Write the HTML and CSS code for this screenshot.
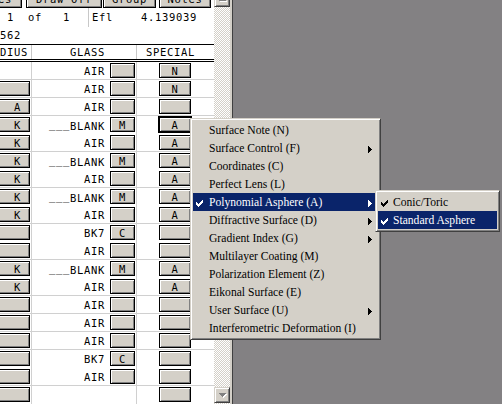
FILE: index.html
```html
<!DOCTYPE html>
<html>
<head>
<meta charset="utf-8">
<link rel="stylesheet" href="styles.css">
</head>
<body>
<div class="app">
  <div class="panel">
    <div class="toolbar">
      <div class="btn tb tb-es">es</div>
      <div class="btn tb tb-draw">Draw Off</div>
      <div class="btn tb tb-group">Group</div>
      <div class="btn tb tb-notes">Notes</div>
    </div>
    <div class="info">
      <div class="info-a"> 1  of   1</div>
      <div class="info-b">Efl    4.139039</div>
    </div>
    <div class="sub">562</div>
    <div class="head">
      <div class="h1">DIUS</div>
      <div class="h2">GLASS</div>
      <div class="h3">SPECIAL</div>
    </div>
    <div class="dbl"></div>
    <div class="rows">
      <div class="r sep"><div class="c1"></div><div class="c2"><span class="g">AIR</span><div class="btn gb"></div></div><div class="c3"><div class="btn sb">N</div></div></div>
      <div class="r sep"><div class="c1"><div class="btn lb"></div></div><div class="c2"><span class="g">AIR</span><div class="btn gb"></div></div><div class="c3"><div class="btn sb">N</div></div></div>
      <div class="r sep"><div class="c1"><div class="btn lb">A</div></div><div class="c2"><span class="g">AIR</span><div class="btn gb"></div></div><div class="c3"><div class="btn sb"></div></div></div>
      <div class="r"><div class="c1"><div class="btn lb">K</div></div><div class="c2"><span class="g"><span class="us">___</span>BLANK</span><div class="btn gb">M</div></div><div class="c3"><div class="btn sb focus">A</div></div></div>
      <div class="r sep"><div class="c1"><div class="btn lb">K</div></div><div class="c2"><span class="g">AIR</span><div class="btn gb"></div></div><div class="c3"><div class="btn sb">A</div></div></div>
      <div class="r"><div class="c1"><div class="btn lb">K</div></div><div class="c2"><span class="g"><span class="us">___</span>BLANK</span><div class="btn gb">M</div></div><div class="c3"><div class="btn sb">A</div></div></div>
      <div class="r sep"><div class="c1"><div class="btn lb">K</div></div><div class="c2"><span class="g">AIR</span><div class="btn gb"></div></div><div class="c3"><div class="btn sb">A</div></div></div>
      <div class="r"><div class="c1"><div class="btn lb">K</div></div><div class="c2"><span class="g"><span class="us">___</span>BLANK</span><div class="btn gb">M</div></div><div class="c3"><div class="btn sb">A</div></div></div>
      <div class="r sep"><div class="c1"><div class="btn lb">K</div></div><div class="c2"><span class="g">AIR</span><div class="btn gb"></div></div><div class="c3"><div class="btn sb">A</div></div></div>
      <div class="r"><div class="c1"><div class="btn lb"></div></div><div class="c2"><span class="g">BK7</span><div class="btn gb">C</div></div><div class="c3"><div class="btn sb"></div></div></div>
      <div class="r sep"><div class="c1"><div class="btn lb"></div></div><div class="c2"><span class="g">AIR</span><div class="btn gb"></div></div><div class="c3"><div class="btn sb"></div></div></div>
      <div class="r"><div class="c1"><div class="btn lb">K</div></div><div class="c2"><span class="g"><span class="us">___</span>BLANK</span><div class="btn gb">M</div></div><div class="c3"><div class="btn sb">A</div></div></div>
      <div class="r sep"><div class="c1"><div class="btn lb">K</div></div><div class="c2"><span class="g">AIR</span><div class="btn gb"></div></div><div class="c3"><div class="btn sb">A</div></div></div>
      <div class="r sep"><div class="c1"><div class="btn lb"></div></div><div class="c2"><span class="g">AIR</span><div class="btn gb"></div></div><div class="c3"><div class="btn sb"></div></div></div>
      <div class="r sep"><div class="c1"><div class="btn lb"></div></div><div class="c2"><span class="g">AIR</span><div class="btn gb"></div></div><div class="c3"><div class="btn sb"></div></div></div>
      <div class="r sep"><div class="c1"><div class="btn lb"></div></div><div class="c2"><span class="g">AIR</span><div class="btn gb"></div></div><div class="c3"><div class="btn sb"></div></div></div>
      <div class="r"><div class="c1"><div class="btn lb"></div></div><div class="c2"><span class="g">BK7</span><div class="btn gb">C</div></div><div class="c3"><div class="btn sb"></div></div></div>
      <div class="r sep"><div class="c1"><div class="btn lb"></div></div><div class="c2"><span class="g">AIR</span><div class="btn gb"></div></div><div class="c3"><div class="btn sb"></div></div></div>
      <div class="r"><div class="c1"><div class="btn lb"></div></div><div class="c2"></div><div class="c3"><div class="btn sb"></div></div></div>
    </div>
  </div>
  <div class="vscroll">
    <div class="sbtn up"><svg width="8" height="5" viewBox="0 0 8 5"><path fill="#fff" d="M4 1h1v1h-1zM3 2h3v1h-3zM2 3h5v1h-5zM1 4h7v1h-7z"/><path fill="#808080" d="M3 0h1v1h-1zM2 1h3v1h-3zM1 2h5v1h-5zM0 3h7v1h-7z"/></svg></div>
    <div class="track"></div>
    <div class="sbtn down"><svg width="8" height="5" viewBox="0 0 8 5"><path fill="#fff" d="M1 1h7v1h-7zM2 2h5v1h-5zM3 3h3v1h-3zM4 4h1v1h-1z"/><path fill="#808080" d="M0 0h7v1h-7zM1 1h5v1h-5zM2 2h3v1h-3zM3 3h1v1h-1z"/></svg></div>
  </div>
  <div class="frame"></div>
  <div class="workspace"></div>
</div>

<div class="menu">
  <div class="mi"><span class="chk"></span><span class="lbl">Surface Note (N)</span></div>
  <div class="mi"><span class="chk"></span><span class="lbl">Surface Control (F)</span><svg class="arr" width="4" height="7" viewBox="0 0 4 7"><path d="M0 0h1v1h-1zM0 1h2v1h-2zM0 2h3v1h-3zM0 3h4v1h-4zM0 4h3v1h-3zM0 5h2v1h-2zM0 6h1v1h-1z"/></svg></div>
  <div class="mi"><span class="chk"></span><span class="lbl">Coordinates (C)</span></div>
  <div class="mi"><span class="chk"></span><span class="lbl">Perfect Lens (L)</span></div>
  <div class="mi hl"><span class="chk"><svg width="7" height="7" viewBox="0 0 7 7"><path d="M6 0h1v1h-1zM5 1h2v1h-2zM0 2h1v1h-1zM4 2h3v1h-3zM0 3h2v1h-2zM3 3h3v1h-3zM0 4h5v1h-5zM1 5h3v1h-3zM2 6h1v1h-1z"/></svg></span><span class="lbl">Polynomial Asphere (A)</span><svg class="arr" width="4" height="7" viewBox="0 0 4 7"><path d="M0 0h1v1h-1zM0 1h2v1h-2zM0 2h3v1h-3zM0 3h4v1h-4zM0 4h3v1h-3zM0 5h2v1h-2zM0 6h1v1h-1z"/></svg></div>
  <div class="mi"><span class="chk"></span><span class="lbl">Diffractive Surface (D)</span><svg class="arr" width="4" height="7" viewBox="0 0 4 7"><path d="M0 0h1v1h-1zM0 1h2v1h-2zM0 2h3v1h-3zM0 3h4v1h-4zM0 4h3v1h-3zM0 5h2v1h-2zM0 6h1v1h-1z"/></svg></div>
  <div class="mi"><span class="chk"></span><span class="lbl">Gradient Index (G)</span><svg class="arr" width="4" height="7" viewBox="0 0 4 7"><path d="M0 0h1v1h-1zM0 1h2v1h-2zM0 2h3v1h-3zM0 3h4v1h-4zM0 4h3v1h-3zM0 5h2v1h-2zM0 6h1v1h-1z"/></svg></div>
  <div class="mi"><span class="chk"></span><span class="lbl">Multilayer Coating (M)</span></div>
  <div class="mi"><span class="chk"></span><span class="lbl">Polarization Element (Z)</span></div>
  <div class="mi"><span class="chk"></span><span class="lbl">Eikonal Surface (E)</span></div>
  <div class="mi"><span class="chk"></span><span class="lbl">User Surface (U)</span><svg class="arr" width="4" height="7" viewBox="0 0 4 7"><path d="M0 0h1v1h-1zM0 1h2v1h-2zM0 2h3v1h-3zM0 3h4v1h-4zM0 4h3v1h-3zM0 5h2v1h-2zM0 6h1v1h-1z"/></svg></div>
  <div class="mi"><span class="chk"></span><span class="lbl">Interferometric Deformation (I)</span></div>
</div>

<div class="menu submenu">
  <div class="mi"><span class="chk"><svg width="7" height="7" viewBox="0 0 7 7"><path d="M6 0h1v1h-1zM5 1h2v1h-2zM0 2h1v1h-1zM4 2h3v1h-3zM0 3h2v1h-2zM3 3h3v1h-3zM0 4h5v1h-5zM1 5h3v1h-3zM2 6h1v1h-1z"/></svg></span><span class="lbl">Conic/Toric</span></div>
  <div class="mi hl"><span class="chk"><svg width="7" height="7" viewBox="0 0 7 7"><path d="M6 0h1v1h-1zM5 1h2v1h-2zM0 2h1v1h-1zM4 2h3v1h-3zM0 3h2v1h-2zM3 3h3v1h-3zM0 4h5v1h-5zM1 5h3v1h-3zM2 6h1v1h-1z"/></svg></span><span class="lbl">Standard Asphere</span></div>
</div>
</body>
</html>
```

FILE: styles.css
```css
* { box-sizing: border-box; }
html, body { margin: 0; padding: 0; }
body {
  width: 502px;
  height: 404px;
  overflow: hidden;
  position: relative;
  background: #838183;
  font-family: "DejaVu Sans Mono", monospace;
  font-size: 10.5px;
  letter-spacing: 0.68px;
  color: #000;
}
.app { display: flex; height: 404px; }
.panel { width: 214px; flex: none; background: #fff; overflow: hidden; }

/* classic 3D button */
.btn {
  background: #d4d0c8;
  border: 1px solid #000;
  box-shadow: inset 1px 1px 0 #fff, inset -1px -1px 0 #808080;
  display: flex;
  align-items: center;
  justify-content: center;
  white-space: pre;
  flex: none;
}

.toolbar { height: 8px; display: flex; align-items: flex-end; overflow: hidden; }
.tb { height: 20px; align-items: flex-end; padding-bottom: 3px; line-height: 10px; }
.tb-es { margin-left: -20px; width: 42px; justify-content: flex-end; padding-right: 9px; }
.tb-draw { margin-left: 4px; width: 76px; }
.tb-group { margin-left: 1px; width: 53px; }
.tb-notes { margin-left: 3px; width: 52px; }

.info { display: flex; height: 19px; line-height: 19px; white-space: pre; }
.info-a { width: 89px; border-right: 1px solid #c8c8c8; }
.info-b { padding-left: 3px; }

.sub { height: 17px; line-height: 17px; }

.head {
  display: grid;
  grid-template-columns: 31px 104px 77px;
  column-gap: 1px;
  height: 15px;
  border-top: 1px solid #000;
  line-height: 14px;
  background: linear-gradient(to right, transparent 31px, #c8c8c8 31px, #c8c8c8 32px, transparent 32px, transparent 136px, #c8c8c8 136px, #c8c8c8 137px, transparent 137px);
}
.h2 { padding-left: 38px; }
.h3 { padding-left: 9px; }

.dbl { height: 3px; border-top: 1px solid #000; border-bottom: 1px solid #000; }

.rows {
  background: linear-gradient(to right, transparent 31px, #d0d0d0 31px, #d0d0d0 32px, transparent 32px, transparent 136px, #d0d0d0 136px, #d0d0d0 137px, transparent 137px);
}
.r {
  display: grid;
  grid-template-columns: 31px 104px 77px;
  column-gap: 1px;
  height: 18px;
  border-bottom: 1px solid transparent;
}
.r.sep { border-bottom-color: #d0d0d0; }
.c1, .c2, .c3 { display: flex; align-items: center; }
.c2 { justify-content: flex-end; padding-right: 1px; }
.g { margin-right: 5px; white-space: pre; }
.us { vertical-align: 2px; }

.lb { width: 40px; height: 15px; margin-left: -10px; justify-content: flex-end; padding-right: 8px; }
.gb { width: 25px; height: 15px; }
.sb { width: 32px; height: 15px; margin-left: 22px; }
.sb.focus { outline: 1px solid #000; }

.vscroll {
  width: 16px;
  flex: none;
  display: flex;
  flex-direction: column;
  background-color: #fff;
  background-image: conic-gradient(#d4d0c8 25%, #fff 0 50%, #d4d0c8 0 75%, #fff 0);
  background-size: 2px 2px;
}
.sbtn {
  height: 16px;
  flex: none;
  background: #d4d0c8;
  border: 1px solid;
  border-color: #d4d0c8 #404040 #404040 #d4d0c8;
  box-shadow: inset 1px 1px 0 #fff, inset -1px -1px 0 #808080;
  display: flex;
  align-items: center;
  justify-content: center;
  padding-left: 1px;
}
.sbtn.up { margin-top: -9px; }
.sbtn.down { margin-bottom: 1px; }
.track { flex: 1; }

.frame { width: 3px; flex: none; border-left: 2px solid #d4d0c8; background: #404040; }
.workspace { flex: 1; background: #838183; }

/* menus */
.menu {
  position: absolute;
  left: 190px;
  top: 118px;
  width: 191px;
  padding: 2px;
  background: #d4d0c8;
  border: 1px solid;
  border-color: #d4d0c8 #404040 #404040 #d4d0c8;
  box-shadow: inset 1px 1px 0 #fff, inset -1px -1px 0 #808080;
  font-family: "Liberation Serif", "Times New Roman", serif;
  font-size: 11.6px;
  letter-spacing: 0;
  color: #000;
}
.submenu { left: 375px; top: 190px; width: 125px; }
.mi {
  height: 18px;
  padding-top: 2px;
  line-height: 16px;
  display: flex;
  align-items: center;
  white-space: pre;
}
.mi .chk { width: 16px; flex: none; display: flex; align-items: center; padding-left: 3px; }
.submenu .mi .chk { width: 15px; }
.mi .lbl { flex: 1; }
.mi .arr { flex: none; margin-right: 6px; fill: #000; }
.mi svg path { fill: #000; }
.mi.hl { background: #0a246a; color: #fff; }
.mi.hl svg path { fill: #fff; }
```
